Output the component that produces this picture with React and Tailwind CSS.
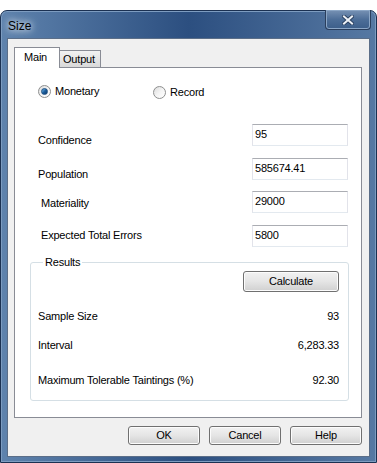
import React from "react";

const font = "font-['Liberation_Sans',Arial,sans-serif]";

const Radio = ({ checked, label }) => (
  <div className="flex items-center">
    <div className="w-[13px] h-[13px] rounded-full border border-[#8e8f8f] bg-gradient-to-br from-[#dcdcdc] via-[#f4f4f4] to-[#ffffff] flex items-center justify-center">
      {checked && (
        <div className="w-[7px] h-[7px] rounded-full bg-gradient-to-br from-[#7ac0f0] via-[#1c5f9e] to-[#0d3a6b] border border-[#1b4e82]"></div>
      )}
    </div>
    <span className="ml-[4px]">{label}</span>
  </div>
);

const Field = ({ value }) => (
  <div className="w-[96px] h-[22px] border border-[#e2e3ea] border-t-[#abadb3] border-b-[#e3e9ef] bg-white pl-[2px] pt-[3px]">
    {value}
  </div>
);

const Button = ({ children, className = "" }) => (
  <div
    className={
      "h-[19px] rounded-[3px] border border-[#707070] bg-gradient-to-b from-[#f2f2f2] via-[#e5e5e5] to-[#d0d0d0] shadow-[inset_0_0_0_1px_#fcfcfc] flex items-center justify-center " +
      className
    }
  >
    {children}
  </div>
);

export default function App() {
  return (
    <div className={"w-[377px] h-[463px] bg-white pt-[10px] text-[11px] leading-[13px] tracking-[-0.2px] text-black " + font}>
      {/* window frame */}
      <div className="h-[453px] w-[377px] rounded-t-[7px] border border-[#1b3152] bg-gradient-to-r from-[#5f83ad] via-[#2c4f80] to-[#5779a3] shadow-[inset_0_0_0_1px_#7d9cc0] flex flex-col px-[6px] pb-[5px]">
        {/* title bar */}
        <div className="h-[27px] flex items-start justify-between">
          <div className="mt-[8px] ml-[1px] text-[12px] leading-[14px] tracking-normal text-black [text-shadow:0_0_6px_#ffffff,0_0_10px_#e6eef7]">
            Size
          </div>
          <div className="w-[46px] h-[20px] -mt-[1px] -mr-[1px] rounded-b-[4px] border border-[#2a3e5c] border-t-0 bg-gradient-to-b from-[#7892b4] via-[#4d6e98] to-[#3c5e8a] shadow-[inset_0_0_0_1px_#8ba6c6] flex items-center justify-center">
            <svg width="12" height="10" viewBox="0 0 12 10">
              <path d="M2 1.5 L10 8.5 M10 1.5 L2 8.5" stroke="#2a4060" strokeWidth="3.8" strokeLinecap="square" />
              <path d="M2 1.5 L10 8.5 M10 1.5 L2 8.5" stroke="#eef2f7" strokeWidth="2" strokeLinecap="square" />
            </svg>
          </div>
        </div>

        {/* client area */}
        <div className="flex-1 bg-[#f0f0f0] border border-[#5b6e88] flex flex-col pl-[6px] pr-[7px] pt-[8px]">
          {/* tabs */}
          <div className="flex items-end h-[20px]">
            <div className="relative z-10 h-[21px] -mb-[1px] w-[46px] bg-white border border-[#898c95] border-b-0 pl-[9px] pt-[3px]">
              Main
            </div>
            <div className="h-[17px] w-[42px] -ml-[1px] bg-gradient-to-b from-[#f2f2f2] to-[#d9d9d9] border border-[#898c95] border-b-0 pl-[3px] pt-[2px]">
              Output
            </div>
          </div>

          {/* tab panel */}
          <div className="h-[351px] bg-white border border-[#898c95] flex flex-col">
            <div className="flex mt-[17px] ml-[23px] h-[14px]">
              <div className="w-[115px]">
                <Radio checked label="Monetary" />
              </div>
              <Radio label="Record" />
            </div>

            <div className="flex items-start justify-between mt-[25px] ml-[23px] mr-[13px]">
              <span className="mt-[10px]">Confidence</span>
              <Field value="95" />
            </div>
            <div className="flex items-start justify-between mt-[11px] ml-[23px] mr-[13px]">
              <span className="mt-[10px]">Population</span>
              <Field value="585674.41" />
            </div>
            <div className="flex items-start justify-between mt-[10px] ml-[26px] mr-[13px]">
              <span className="mt-[6px]">Materiality</span>
              <Field value="29000" />
            </div>
            <div className="flex items-start justify-between mt-[12px] ml-[26px] mr-[13px]">
              <span className="mt-[4px]">Expected Total Errors</span>
              <Field value="5800" />
            </div>

            {/* results group */}
            <fieldset className="mt-[9px] ml-[15px] mr-[12px] h-[145px] border border-[#d5dfe5] rounded-[3px] pl-[7px] pr-[9px]">
              <legend className="ml-[5px] px-[2px]">Results</legend>
              <div className="flex justify-end mt-[2px]">
                <Button className="w-[96px] h-[21px]">Calculate</Button>
              </div>
              <div className="flex justify-between mt-[18px]">
                <span>Sample Size</span>
                <span>93</span>
              </div>
              <div className="flex justify-between mt-[16px]">
                <span>Interval</span>
                <span>6,283.33</span>
              </div>
              <div className="flex justify-between mt-[22px]">
                <span>Maximum Tolerable Taintings (%)</span>
                <span>92.30</span>
              </div>
            </fieldset>
          </div>

          {/* bottom buttons */}
          <div className="flex justify-end gap-[9px] mt-[8px]">
            <Button className="w-[72px]">OK</Button>
            <Button className="w-[72px]">Cancel</Button>
            <Button className="w-[72px]">Help</Button>
          </div>
        </div>
      </div>
    </div>
  );
}
